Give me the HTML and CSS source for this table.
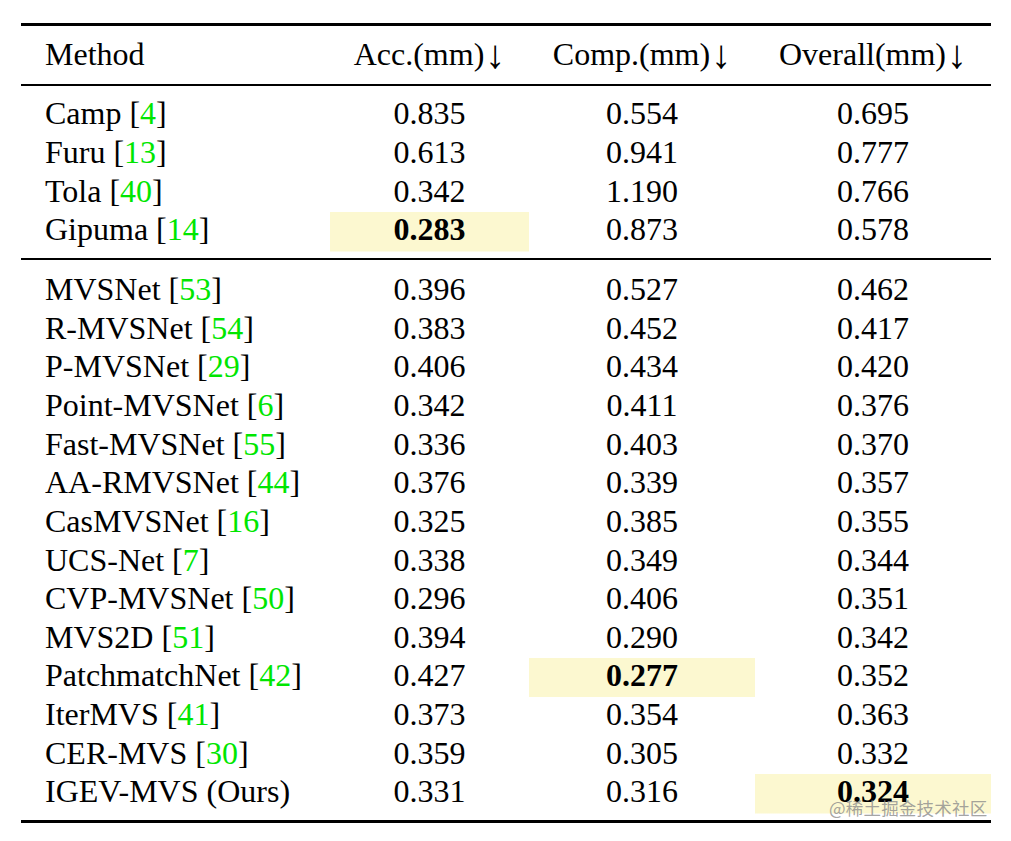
FILE: index.html
```html
<!DOCTYPE html>
<html lang="en">
<head>
<meta charset="utf-8">
<title>Results table</title>
<link rel="stylesheet" href="styles.css">
</head>
<body>
<div class="page">
<table class="results">
  <colgroup>
    <col class="c-method"><col class="c-acc"><col class="c-comp"><col class="c-all">
  </colgroup>
  <thead>
    <tr><th class="name">Method</th><th>Acc.(mm)<span class="arr">↓</span></th><th>Comp.(mm)<span class="arr">↓</span></th><th>Overall(mm)<span class="arr">↓</span></th></tr>
  </thead>
  <tbody>
    <tr class="first"><td class="name">Camp [<span class="cite">4</span>]</td><td>0.835</td><td>0.554</td><td>0.695</td></tr>
    <tr><td class="name">Furu [<span class="cite">13</span>]</td><td>0.613</td><td>0.941</td><td>0.777</td></tr>
    <tr><td class="name">Tola [<span class="cite">40</span>]</td><td>0.342</td><td>1.190</td><td>0.766</td></tr>
    <tr class="last"><td class="name">Gipuma [<span class="cite">14</span>]</td><td class="hl"><b>0.283</b></td><td>0.873</td><td>0.578</td></tr>
  </tbody>
  <tbody>
    <tr class="first2"><td class="name">MVSNet [<span class="cite">53</span>]</td><td>0.396</td><td>0.527</td><td>0.462</td></tr>
    <tr><td class="name">R-MVSNet [<span class="cite">54</span>]</td><td>0.383</td><td>0.452</td><td>0.417</td></tr>
    <tr><td class="name">P-MVSNet [<span class="cite">29</span>]</td><td>0.406</td><td>0.434</td><td>0.420</td></tr>
    <tr><td class="name">Point-MVSNet [<span class="cite">6</span>]</td><td>0.342</td><td>0.411</td><td>0.376</td></tr>
    <tr><td class="name">Fast-MVSNet [<span class="cite">55</span>]</td><td>0.336</td><td>0.403</td><td>0.370</td></tr>
    <tr><td class="name">AA-RMVSNet [<span class="cite">44</span>]</td><td>0.376</td><td>0.339</td><td>0.357</td></tr>
    <tr><td class="name">CasMVSNet [<span class="cite">16</span>]</td><td>0.325</td><td>0.385</td><td>0.355</td></tr>
    <tr><td class="name">UCS-Net [<span class="cite">7</span>]</td><td>0.338</td><td>0.349</td><td>0.344</td></tr>
    <tr><td class="name">CVP-MVSNet [<span class="cite">50</span>]</td><td>0.296</td><td>0.406</td><td>0.351</td></tr>
    <tr><td class="name">MVS2D [<span class="cite">51</span>]</td><td>0.394</td><td>0.290</td><td>0.342</td></tr>
    <tr><td class="name">PatchmatchNet [<span class="cite">42</span>]</td><td>0.427</td><td class="hl"><b>0.277</b></td><td>0.352</td></tr>
    <tr><td class="name">IterMVS [<span class="cite">41</span>]</td><td>0.373</td><td>0.354</td><td>0.363</td></tr>
    <tr><td class="name">CER-MVS [<span class="cite">30</span>]</td><td>0.359</td><td>0.305</td><td>0.332</td></tr>
    <tr class="final"><td class="name">IGEV-MVS (Ours)</td><td>0.331</td><td>0.316</td><td class="hl"><b>0.324</b></td></tr>
  </tbody>
</table>
<div class="watermark">@稀土掘金技术社区</div>
</div>
</body>
</html>
```

FILE: styles.css
```css
html, body {
  margin: 0;
  padding: 0;
  background: #ffffff;
}

.page {
  position: relative;
  width: 1011px;
  height: 841px;
  padding-top: 23px;
  box-sizing: border-box;
}

.results {
  margin-left: 21px;
  border-collapse: collapse;
  table-layout: fixed;
  width: 970px;
  font-family: "Liberation Serif", "Times New Roman", serif;
  font-size: 32px;
  color: #000000;
}

.c-method { width: 309px; }
.c-acc { width: 199px; }
.c-comp { width: 226px; }
.c-all { width: 236px; }

.results th,
.results td {
  padding: 0 0 3.65px 0;
  line-height: 35px;
  text-align: center;
  font-weight: normal;
  white-space: nowrap;
}

.results th {
  border-top: 3px solid #000;
  border-bottom: 2px solid #000;
  padding-top: 11.4px;
  padding-bottom: 11.6px;
}

.results .name {
  text-align: left;
  padding-left: 24px;
}

.arr {
  display: inline-block;
  font-size: 1.25em;
  line-height: 0;
  vertical-align: -0.06em;
  margin-left: 1px;
  font-weight: lighter;
}

.results tr.first td { padding-top: 10.4px; }
.results tr.last td {
  padding-bottom: 10.65px;
  border-bottom: 2px solid #000;
}
.results tr.first2 td { padding-top: 12.1px; }
.results tr.final td {
  padding-bottom: 10.45px;
  border-bottom: 3px solid #000;
}

.results td.hl {
  background: linear-gradient(#fcf8d0, #fcf8d0) 0 0 / 100% 39.5px no-repeat;
}

.results b { font-weight: bold; }

.cite { color: #00e600; }

.watermark {
  position: absolute;
  left: 829px;
  top: 797px;
  font-family: "Noto Sans CJK SC", "Noto Sans", sans-serif;
  font-size: 17.5px;
  letter-spacing: 0.2px;
  line-height: 22px;
  color: rgba(140, 140, 140, 0.8);
  white-space: nowrap;
}
```
